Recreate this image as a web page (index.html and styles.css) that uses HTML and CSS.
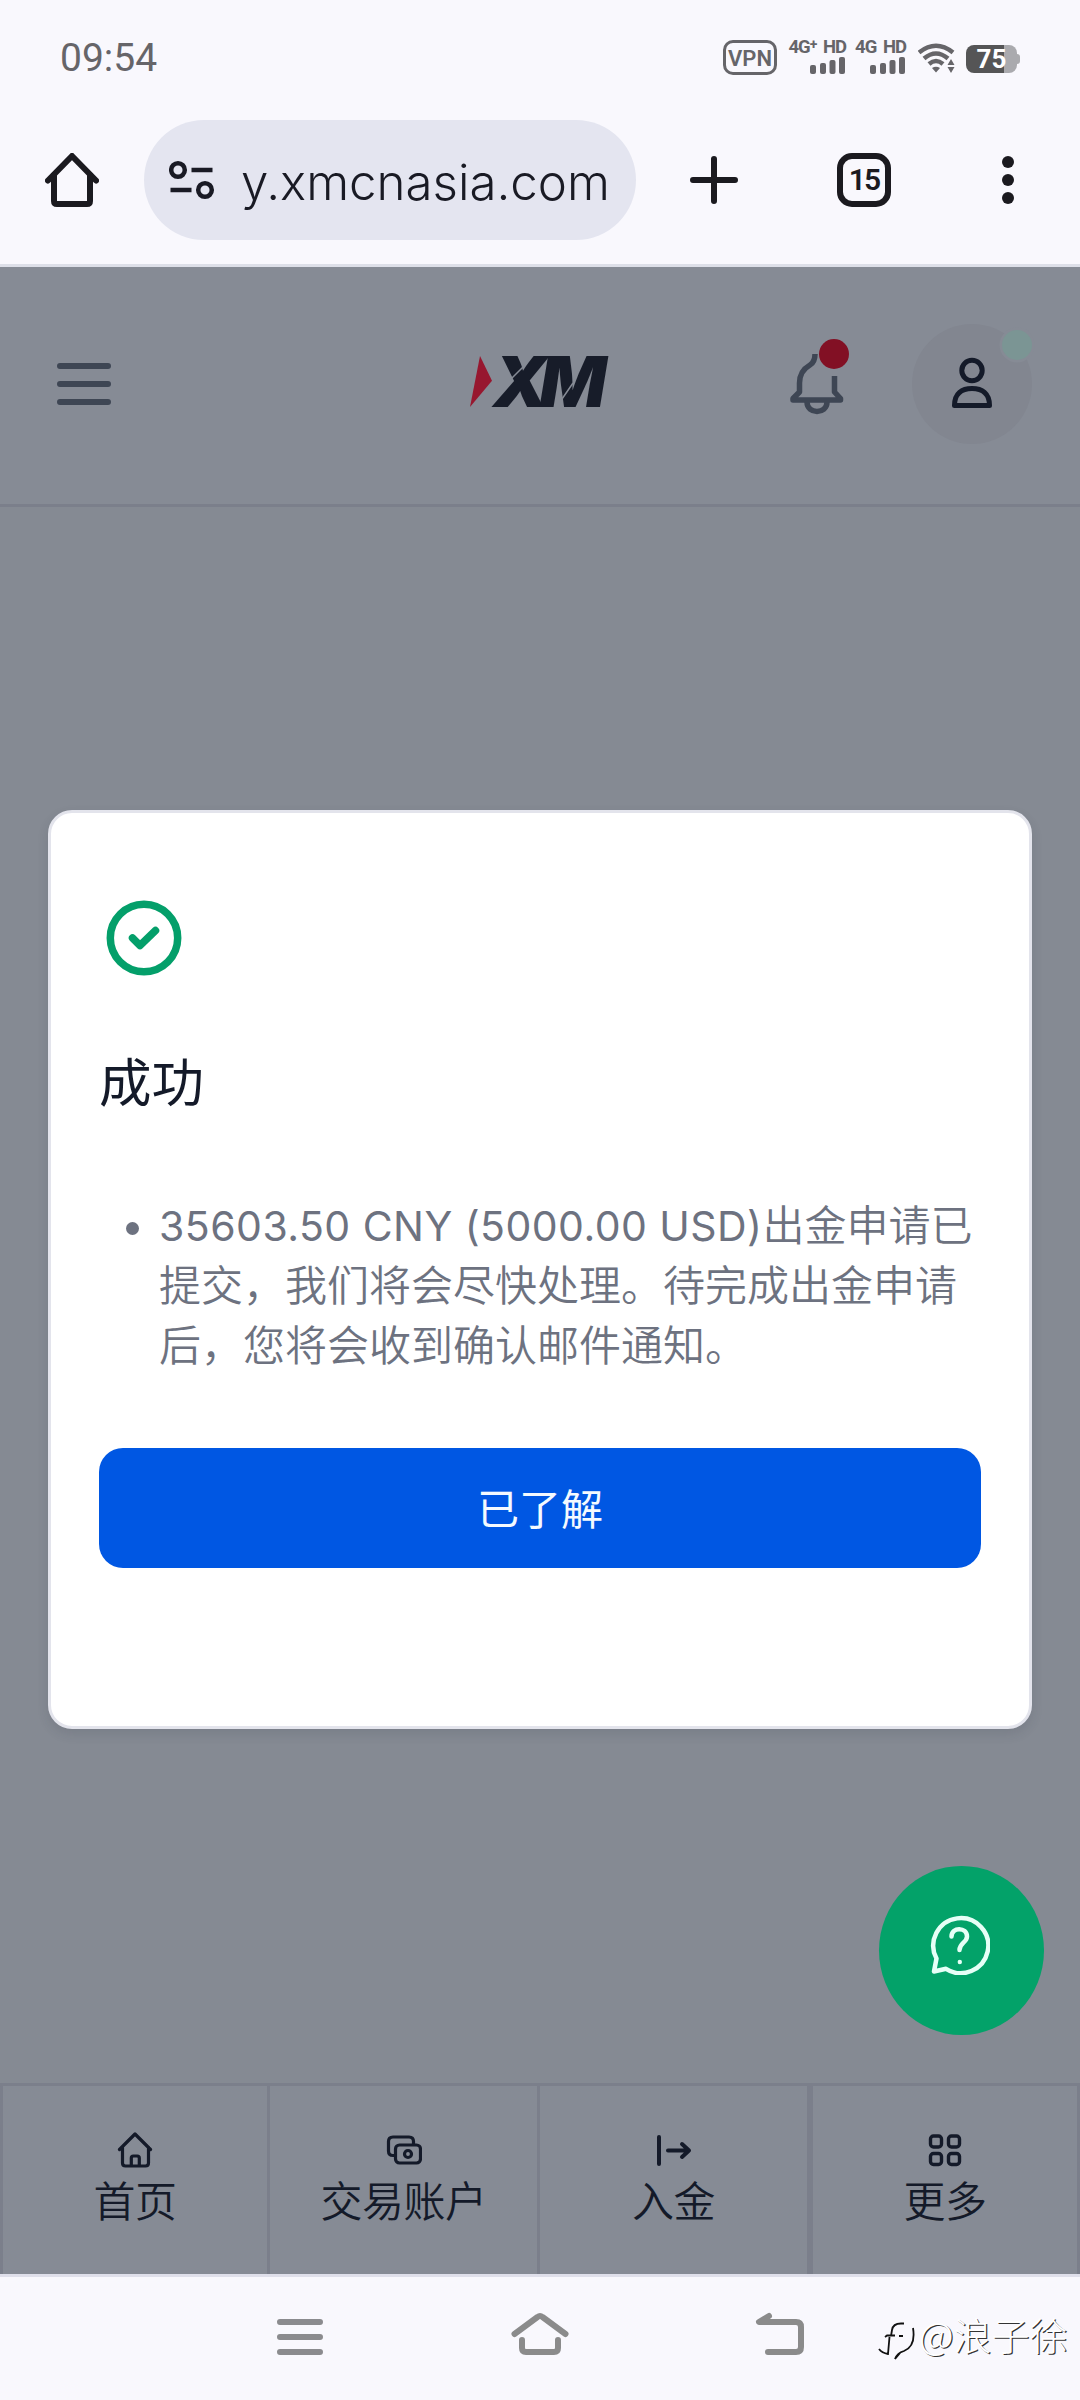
FILE: index.html
```html
<!DOCTYPE html>
<html lang="zh-CN">
<head>
<meta charset="utf-8">
<title>XM</title>
<link rel="stylesheet" href="styles.css">
</head>
<body>
<div class="screen">
  <div class="status">
    <span class="clock">09:54</span>
    <div class="indicators">
      <span class="vpn">VPN</span>
      <div class="sim sim-a">
        <span class="sim-label">4G<sup>+</sup> HD</span>
        <svg width="36" height="17" viewBox="0 0 36 17" fill="#666569"><rect x="0" y="8" width="6" height="9" rx="2"/><rect x="10" y="6" width="6" height="11" rx="2"/><rect x="19.5" y="3" width="6" height="14" rx="2"/><rect x="29" y="0" width="6" height="17" rx="2"/></svg>
      </div>
      <div class="sim sim-b">
        <span class="sim-label">4G HD</span>
        <svg width="36" height="17" viewBox="0 0 36 17" fill="#666569"><rect x="0" y="8" width="6" height="9" rx="2"/><rect x="10" y="6" width="6" height="11" rx="2"/><rect x="19.5" y="3" width="6" height="14" rx="2"/><rect x="29" y="0" width="6" height="17" rx="2"/></svg>
      </div>
      <svg class="wifi" width="37" height="30" viewBox="0 0 37 30">
        <g fill="none" stroke="#666569" stroke-width="4.500"><path d="M1 9.5Q18 -4 35 9.500"/><path d="M6 15.500Q18 5.500 30 15.500"/><path d="M11 21Q18 15 25 21"/></g>
        <path d="M14 25Q18 22.500 22 25L18 29.500ZM29.500 22L33 16L36.500 22ZM29.500 24L33 30L36.500 24Z" fill="#666569"/>
      </svg>
      <div class="battery"><span class="battery-body">75</span><span class="battery-tip"></span></div>
    </div>
  </div>

  <div class="toolbar">
    <svg class="tb-home" width="54" height="54" viewBox="0 0 54 54" fill="none" stroke="#1b1a1f" stroke-width="6" stroke-linecap="round" stroke-linejoin="round"><path d="M3 27.500L27 3L51 27.500M9 22V48Q9 51 12 51H42Q45 51 45 48V22"/></svg>
    <div class="url">
      <svg width="46" height="40" viewBox="0 0 46 40" fill="none" stroke="#191a24" stroke-width="4.500"><circle cx="9" cy="10" r="6.800"/><path d="M22.500 10H43.500M1.500 30H22.500"/><circle cx="36" cy="30" r="6.800"/></svg>
      <span class="address">y.xmcnasia.com</span>
    </div>
    <svg class="tb-plus" width="48" height="48" viewBox="0 0 48 48" stroke="#1b1a1f" stroke-width="6" stroke-linecap="round"><path d="M24 3V45M3 24H45"/></svg>
    <span class="tabs">15</span>
    <svg class="tb-more" width="12" height="48" viewBox="0 0 12 48" fill="#1b1a1f"><circle cx="6" cy="6" r="6"/><circle cx="6" cy="24" r="6"/><circle cx="6" cy="42" r="6"/></svg>
  </div>

  <main class="page">
    <header class="site-header">
      <svg class="burger" width="54" height="42" viewBox="0 0 54 42" stroke="#3e4654" stroke-width="6" stroke-linecap="round"><path d="M3 3H51M3 21H51M3 39H51"/></svg>
      <svg class="logo" width="142" height="54" viewBox="0 0 142 54">
        <path d="M11 1L23 25.700L1 52Z" fill="#97172f"/>
        <text x="24" y="51.500">XM</text>
        <path d="M42 24L54 12M93 44L104 28" stroke="#868b95" stroke-width="1.500"/>
      </svg>
      <svg class="bell" width="64" height="78" viewBox="0 0 64 78">
        <g fill="none" stroke="#3e4654" stroke-width="5.500" stroke-linejoin="round" stroke-linecap="butt"><path d="M26 15Q26 23 21 26Q10.500 32 10.500 44V53L4 59.500V61H51.500V59.500L45.500 53V37"/><path d="M18 63C18 75.500 38 75.500 38 63"/></g>
        <circle cx="45" cy="15" r="15" fill="#821024"/>
      </svg>
      <svg class="avatar" width="126" height="126" viewBox="0 0 126 126">
        <circle cx="60" cy="66" r="60" fill="#828690"/>
        <circle cx="105" cy="27" r="17.500" fill="#868b95"/>
        <circle cx="105" cy="27" r="15" fill="#7b9594"/>
        <g fill="none" stroke="#141a29" stroke-width="5" stroke-linejoin="round"><circle cx="60" cy="52.500" r="10.200"/><path d="M42.500 87.500C42.500 75 50 70.500 60 70.500S77.500 75 77.500 87.500Z"/></g>
      </svg>
    </header>

    <section class="modal">
      <svg class="check" width="76" height="76" viewBox="0 0 76 76" fill="none" stroke="#049f6a" stroke-width="7.500" stroke-linecap="round" stroke-linejoin="round"><circle cx="38" cy="38" r="33.700"/><path d="M26.500 38L34 45.500L49.500 30.500"/></svg>
      <h1 class="title">成功</h1>
      <div class="message">
        <span class="bullet"></span>
        <p class="copy"><span class="amount">35603.50 CNY (5000.00 USD)</span>出金申请已<br>提交，我们将会尽快处理。待完成出金申请<br>后，您将会收到确认邮件通知。</p>
      </div>
      <button class="confirm">已了解</button>
    </section>

    <div class="fab">
      <svg width="60" height="60" viewBox="0 0 60 60" fill="none" stroke="#e6fff7" stroke-width="4.500" stroke-linecap="round" stroke-linejoin="round"><path d="M6.500 43.500A27.500 27.500 0 1 1 16 53.800L4 56.500Z"/><path d="M21.500 21.500C21.500 11.500 37 12 37 21.500C37 27.500 29.500 28 29.500 35"/><circle cx="29.800" cy="47" r="2.200" fill="#e6fff7" stroke="none"/></svg>
    </div>

    <nav class="tabbar">
      <div class="tab">
        <svg width="36" height="36" viewBox="0 0 36 36" fill="none" stroke="#141a29" stroke-width="3.200" stroke-linecap="round" stroke-linejoin="round"><path d="M2.500 17.500L18 2L33.500 17.500M5.500 15V31Q5.500 34 8.500 34H28.500Q31.500 34 31.500 31V15M14.300 34V26Q14.300 24 16.300 24H20.300Q22.300 24 22.300 26V34"/></svg>
        <span>首页</span>
      </div>
      <div class="tab">
        <svg width="36" height="36" viewBox="0 0 36 36" fill="none" stroke="#141a29" stroke-width="3.200" stroke-linejoin="round"><rect x="9.500" y="13" width="25" height="18" rx="4"/><circle cx="22" cy="22" r="3.500"/><path d="M9.500 23.500H7Q2.500 23.500 2.500 19V9.500Q2.500 5 7 5H23Q27.500 5 27.500 9.500V13"/></svg>
        <span>交易账户</span>
      </div>
      <div class="tab">
        <svg width="36" height="36" viewBox="0 0 36 36" fill="none" stroke="#141a29" stroke-width="4" stroke-linecap="round" stroke-linejoin="round"><path d="M3 5V32M12 18.500H33M26 12L33 18.500L26 25"/></svg>
        <span>入金</span>
      </div>
      <div class="tab tab-last">
        <svg width="36" height="36" viewBox="0 0 36 36" fill="none" stroke="#141a29" stroke-width="3.400"><rect x="3.500" y="4" width="11" height="11" rx="3"/><rect x="21.500" y="4" width="11" height="11" rx="3"/><rect x="3.500" y="21.500" width="11" height="11" rx="3"/><rect x="21.500" y="21.500" width="11" height="11" rx="3"/></svg>
        <span>更多</span>
      </div>
    </nav>
  </main>

  <footer class="sysnav">
    <svg width="60" height="48" viewBox="0 0 60 48" stroke="#8b8b8e" stroke-width="6" stroke-linecap="round"><path d="M10 12H50M10 27H50M10 42H50"/></svg>
    <svg width="60" height="48" viewBox="0 0 60 48" fill="none" stroke="#8b8b8b" stroke-width="6" stroke-linecap="round" stroke-linejoin="round"><path d="M4.500 24L27.500 7Q30 5 32.500 7L55.500 24M12 30V38Q12 42 16 42H44Q48 42 48 38V30"/></svg>
    <svg width="60" height="48" viewBox="0 0 60 48" fill="none" stroke="#8b8b8b" stroke-width="6" stroke-linecap="round" stroke-linejoin="round"><path d="M19 6L9 12H46Q51 12 51 17V37Q51 42 46 42H18"/></svg>
    <div class="watermark">
      <svg width="40" height="48" viewBox="0 0 40 48" fill="none" stroke="#111" stroke-width="1.800"><path d="M28 8.500H25Q17 8.500 16 15L15 21M9 22L11 20.500H19M23 21H27M13.500 22L12 39Q6 38 3 34M37 13Q40 31 28 36Q21 38 19 44L24 38"/></svg>
      <span>@浪子徐</span>
    </div>
  </footer>
</div>
</body>
</html>
```
FILE: styles.css
```css
* { box-sizing: border-box; }
body { margin: 0; background: #f9f8fd; font-family: Inter, "Noto Sans CJK SC", sans-serif; }
svg { display: block; flex: none; }
.screen { width: 1080px; height: 2400px; display: flex; flex-direction: column; overflow: hidden; background: #f9f8fd; }

.status { height: 116px; display: flex; justify-content: space-between; padding: 0 60px; color: #666569; font-family: Roboto, sans-serif; }
.clock { font-size: 39px; line-height: 46px; padding-top: 35px; }
.indicators { display: flex; align-items: flex-start; padding-top: 40px; }
.vpn { width: 54px; height: 35px; border: 3px solid #666569; border-radius: 10px; font-size: 22px; font-weight: 600; line-height: 31px; text-align: center; }
.sim { display: flex; flex-direction: column; align-items: flex-end; white-space: nowrap; }
.sim-a { margin-left: 11px; width: 58px; }
.sim-b { margin-left: 11px; width: 49px; }
.sim-label { font-size: 18.500px; line-height: 15px; height: 17px; font-weight: 700; letter-spacing: -1px; word-spacing: 3px; }
.sim-label sup { font-size: 14px; line-height: 0; vertical-align: 4px; }
.wifi { margin: 3px 0 0 12px; }
.battery { display: flex; align-items: center; margin: 5px 0 0 11px; }
.battery-body { width: 51px; height: 28px; border-radius: 8px; background: linear-gradient(90deg, #555556 38px, #aaaaae 38px); color: #fff; font-size: 26px; font-weight: 700; line-height: 29px; text-align: center; }
.battery-tip { width: 3px; height: 10px; border-radius: 0 3px 3px 0; background: #aaaaae; }

.toolbar { height: 151px; display: flex; align-items: center; padding: 2px 66px 22px 45px; border-bottom: 3px solid #dddfe8; }
.url { display: flex; align-items: center; width: 492px; height: 120px; margin-left: 45px; padding-left: 25px; border-radius: 60px; background: #e4e5f0; }
.address { margin: 4px 0 0 26px; font-size: 49.200px; line-height: 60px; font-weight: 340; color: #191a24; white-space: nowrap; }
.tb-plus { margin-left: 54px; }
.tabs { flex: none; width: 54px; height: 54px; margin-left: 99px; border: 6px solid #1b1a1f; border-radius: 15px; color: #1b1a1f; font-family: Roboto, sans-serif; font-size: 30px; font-weight: 600; line-height: 42px; letter-spacing: -2px; text-align: center; }
.tb-more { margin-left: auto; }

.page { position: relative; height: 2007px; display: flex; flex-direction: column; background: #858a93; }
.site-header { height: 240px; display: flex; align-items: flex-start; background: #868b95; border-bottom: 3px solid #7b7f8b; }
.burger { margin: 96px 0 0 57px; }
.logo { margin: 88px 0 0 358px; overflow: visible; }
.logo text { font-family: Inter, sans-serif; font-size: 70px; font-weight: 900; font-style: italic; letter-spacing: -8.500px; fill: #171c29; }
.bell { margin: 72px 0 0 178px; }
.avatar { margin: 51px 0 0 59px; }

.modal { position: absolute; left: 48px; top: 543px; width: 984px; height: 919px; padding: 87px 48px 0; display: flex; flex-direction: column; background: #fff; border: 3px solid #e3e4ec; border-radius: 24px; box-shadow: 0 5px 12px rgba(30, 40, 60, 0.12); }
.check { margin-left: 7px; }
.title { margin: 67px 0 0; font-size: 52.500px; line-height: 80px; font-weight: 400; color: #141a29; }
.message { display: flex; margin-top: 73px; color: #6d7280; }
.bullet { width: 13px; height: 13px; margin: 26px 20px 0 27px; border-radius: 50%; background: #6d7280; }
.copy { margin: 0; font-size: 42px; line-height: 60px; font-weight: 350; white-space: nowrap; }
.amount { font-size: 41px; font-weight: 400; letter-spacing: 0.460px; }
.confirm { height: 120px; margin: 72px 0 0; padding: 0 0 3px; border: 0; border-radius: 24px; background: #0057e3; color: #f4faff; font: 400 42px/116px "Noto Sans CJK SC", sans-serif; }

.fab { position: absolute; left: 879px; top: 1599px; width: 165px; height: 169px; display: flex; align-items: flex-start; justify-content: center; padding: 49px 3px 0 0; border-radius: 50%; background: #03a269; }

.tabbar { height: 191px; margin-top: auto; display: grid; grid-template-columns: 267px 270px 270px 270px; background: #868b95; border-top: 3px solid #7b7f8b; border-left: 3px solid #7b7f8b; }
.tab { display: flex; flex-direction: column; align-items: center; padding-top: 46px; border-right: 3px solid #7b7f8b; color: #141a29; font-size: 42px; line-height: 60px; font-weight: 350; }
.tab span { margin-top: 4px; letter-spacing: -0.500px; }
.tab-last { border-left: 3px solid #7b7f8b; }

.sysnav { position: relative; height: 126px; display: flex; gap: 180px; padding: 33px 0 0 270px; border-top: 3px solid #dfdfea; }
.watermark { position: absolute; left: 876px; top: 38px; display: flex; align-items: flex-start; color: #fff; font-family: "Noto Sans CJK SC", sans-serif; font-size: 38px; font-weight: 300; line-height: 38px; white-space: nowrap; text-shadow: 1.200px 1.200px 0 #333; }
.watermark span { margin-left: 3px; }
```
